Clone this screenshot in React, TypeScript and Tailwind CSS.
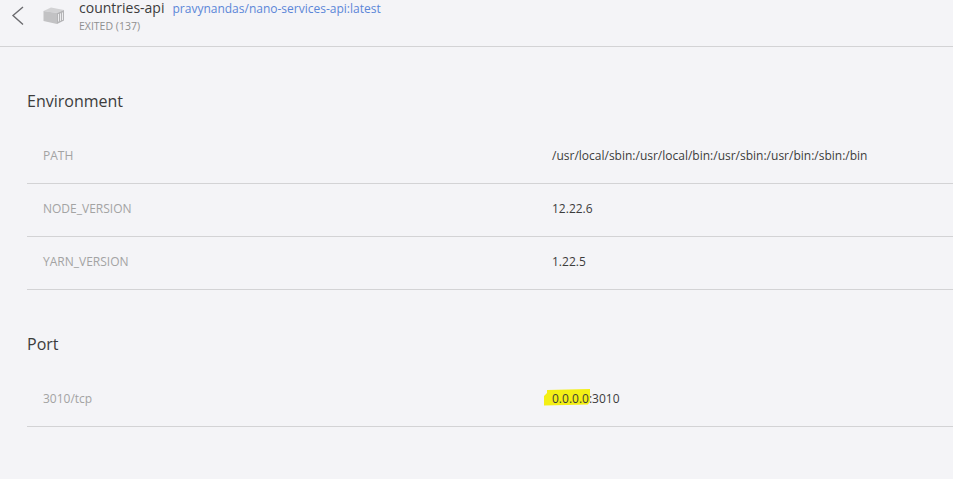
const envRows = [
  ["PATH", "/usr/local/sbin:/usr/local/bin:/usr/sbin:/usr/bin:/sbin:/bin"],
  ["NODE_VERSION", "12.22.6"],
  ["YARN_VERSION", "1.22.5"],
];

function Row({ name, children, port }: { name: string; children: React.ReactNode; port?: boolean }) {
  return (
    <div className={port ? "flex h-[54px] items-center border-b border-[#d3d3d5] pb-[2px] pl-4 text-[12px]" : "flex h-[53px] items-center border-b border-[#d3d3d5] pb-[2px] pl-4 text-[12px]"}>
      <div className="w-[509px] shrink-0 text-[#a3a3a3]">{name}</div>
      <div className="text-[#3c3c3c]">{children}</div>
    </div>
  );
}

export default function App() {
  return (
    <div className="h-[479px] w-[953px] overflow-hidden bg-[#f4f4f7] font-['Open_Sans',sans-serif]">
      <header className="flex h-[47px] items-start border-b border-[#d3d3d5]">
        <svg width="14" height="20" viewBox="0 0 14 20" className="ml-[11px] mt-[6px]" fill="none" stroke="#6b6b6f" strokeWidth="1.4">
          <path d="M12 1 2 9.5 12 18.5" />
        </svg>
        <svg width="24" height="20" viewBox="0 0 24 20" className="ml-[17px] mt-[5px]">
          <path d="M1.500 6 9 2.500l13 2.500-7 3z" fill="#d2d2d4" />
          <path d="M1.500 6 15 8v11L1.500 16z" fill="#c2c2c4" />
          <path d="M15 8 22 5v10.500L15 19z" fill="#b4b4b6" />
          <path d="M16.500 9v7.500M18.500 8.300v7.500M20.500 7.500v7.500" stroke="#ececee" strokeWidth="1" />
        </svg>
        <div className="ml-[13px]">
          <div className="flex items-baseline">
            <span className="text-[14px] leading-[16px] text-[#3c3c3c]">countries-api</span>
            <span className="ml-[8px] text-[12px] leading-[16px] text-[#5b86d8]">pravynandas/nano-services-api:latest</span>
          </div>
          <div className="mt-[3px] text-[10.500px] leading-[13px] text-[#8f8f8f]">EXITED (137)</div>
        </div>
      </header>

      <main className="pl-[27px]">
        <h2 className="mt-[43px] h-[41px] text-[16px] leading-[22px] text-[#3c3c3c]">Environment</h2>
        {envRows.map(([name, value]) => (
          <Row key={name} name={name}>{value}</Row>
        ))}
        <h2 className="mt-[43px] h-[40px] text-[16px] leading-[22px] text-[#3c3c3c]">Port</h2>
        <Row name="3010/tcp" port>
          <span className="relative">
            <svg width="46" height="17" viewBox="0 0 46 17" className="absolute left-[-8px] top-[-1px]">
              <path d="M3 1 46 0V12L44 15.500 0 16.500 0 7 3 4z" fill="#f3ef14" />
            </svg>
            <span className="relative">0.0.0.0:3010</span>
          </span>
        </Row>
      </main>
    </div>
  );
}
